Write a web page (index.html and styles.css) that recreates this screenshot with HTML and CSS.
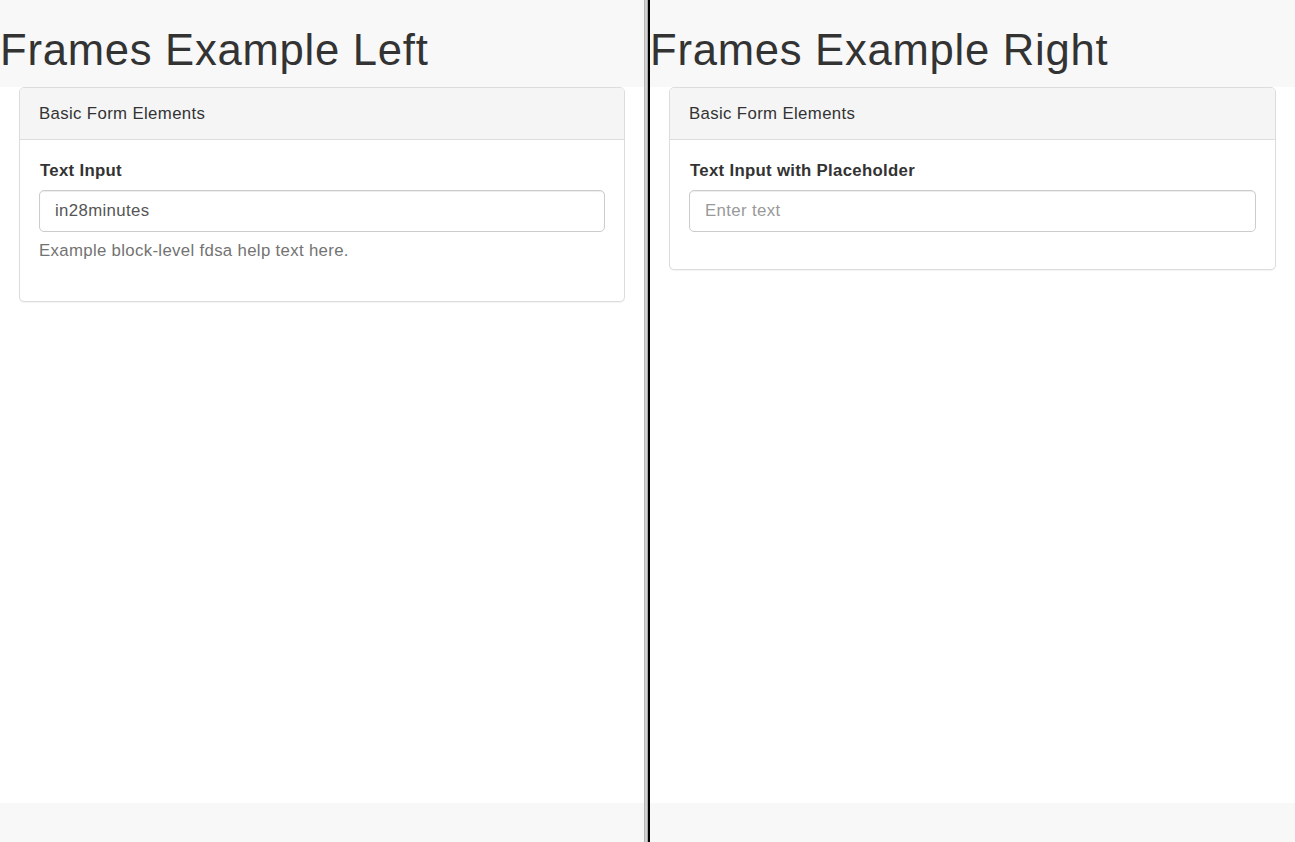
FILE: index.html
```html
<!DOCTYPE html>
<html>
<head>
<meta charset="utf-8">
<title>Frames Example</title>
<link rel="stylesheet" href="styles.css">
</head>
<body>
<div class="frameset">
  <div class="frame frame-left">
    <header class="frame-header"><h1 class="title">Frames Example Left</h1></header>
    <main class="frame-main">
      <section class="panel">
        <div class="panel-heading">Basic Form Elements</div>
        <div class="panel-body">
          <div class="form-group">
            <label class="label">Text Input</label>
            <input class="input" type="text" value="in28minutes">
            <p class="help">Example block-level fdsa help text here.</p>
          </div>
        </div>
      </section>
    </main>
    <footer class="frame-footer"></footer>
  </div>
  <div class="divider"></div>
  <div class="frame frame-right">
    <header class="frame-header"><h1 class="title">Frames Example Right</h1></header>
    <main class="frame-main">
      <section class="panel">
        <div class="panel-heading">Basic Form Elements</div>
        <div class="panel-body">
          <div class="form-group">
            <label class="label">Text Input with Placeholder</label>
            <input class="input" type="text" placeholder="Enter text">
          </div>
        </div>
      </section>
    </main>
    <footer class="frame-footer"></footer>
  </div>
</div>
</body>
</html>
```
FILE: styles.css
```css
html, body {
  margin: 0;
  padding: 0;
  height: 100%;
}
body {
  font-family: "Liberation Sans", Arial, sans-serif;
  font-size: 16.8px;
  letter-spacing: 0.36px;
  color: #333;
  background: #fff;
}
.frameset {
  display: flex;
  height: 842px;
}
.frame {
  display: flex;
  flex-direction: column;
  height: 100%;
}
.frame-left { width: 644px; }
.frame-right { width: 645px; }
.divider {
  width: 6px;
  height: 100%;
  background: linear-gradient(to right, #b4b4b4 0, #b4b4b4 1px, #d0d0d0 1px, #d0d0d0 3px, #a8a8a8 3px, #a8a8a8 4px, #000 4px, #000 6px);
}
.frame-header {
  height: 87px;
  background: #f8f8f8;
  box-sizing: border-box;
  padding-top: 27px;
}
.title {
  margin: 0;
  font-size: 43.6px;
  font-weight: 500;
  line-height: 47.5px;
  letter-spacing: 0.75px;
  color: #333;
}
.frame-main {
  flex: 1;
  background: #fff;
}
.frame-footer {
  height: 39px;
  background: #f8f8f8;
}
.panel {
  margin: 0 19px;
  border: 1px solid #ddd;
  border-radius: 5px;
  background: #fff;
  box-shadow: 0 1px 1px rgba(0,0,0,0.05);
}
.panel-heading {
  background: #f5f5f5;
  border-bottom: 1px solid #ddd;
  border-radius: 4px 4px 0 0;
  padding: 14px 19px 13px;
  line-height: 24px;
}
.panel-body {
  padding: 18px 19px 18px;
}
.form-group {
  margin-bottom: 19px;
}
.label {
  display: block;
  font-weight: bold;
  line-height: 24px;
  letter-spacing: 0.3px;
  margin-top: 1px;
  margin-bottom: 7px;
  padding-left: 1px;
}
.input {
  display: block;
  box-sizing: border-box;
  width: 100%;
  height: 42px;
  margin: 0;
  padding: 0 15px;
  border: 1px solid #ccc;
  border-radius: 5px;
  font-family: inherit;
  font-size: 16.8px;
  letter-spacing: 0.36px;
  color: #555;
  background: #fff;
  box-shadow: inset 0 1px 1px rgba(0,0,0,0.075);
  outline: none;
}
.input::placeholder {
  color: #999;
}
.help {
  margin: 7px 0 0;
  padding-bottom: 1px;
  line-height: 24px;
  letter-spacing: 0.33px;
  color: #737373;
}
```
